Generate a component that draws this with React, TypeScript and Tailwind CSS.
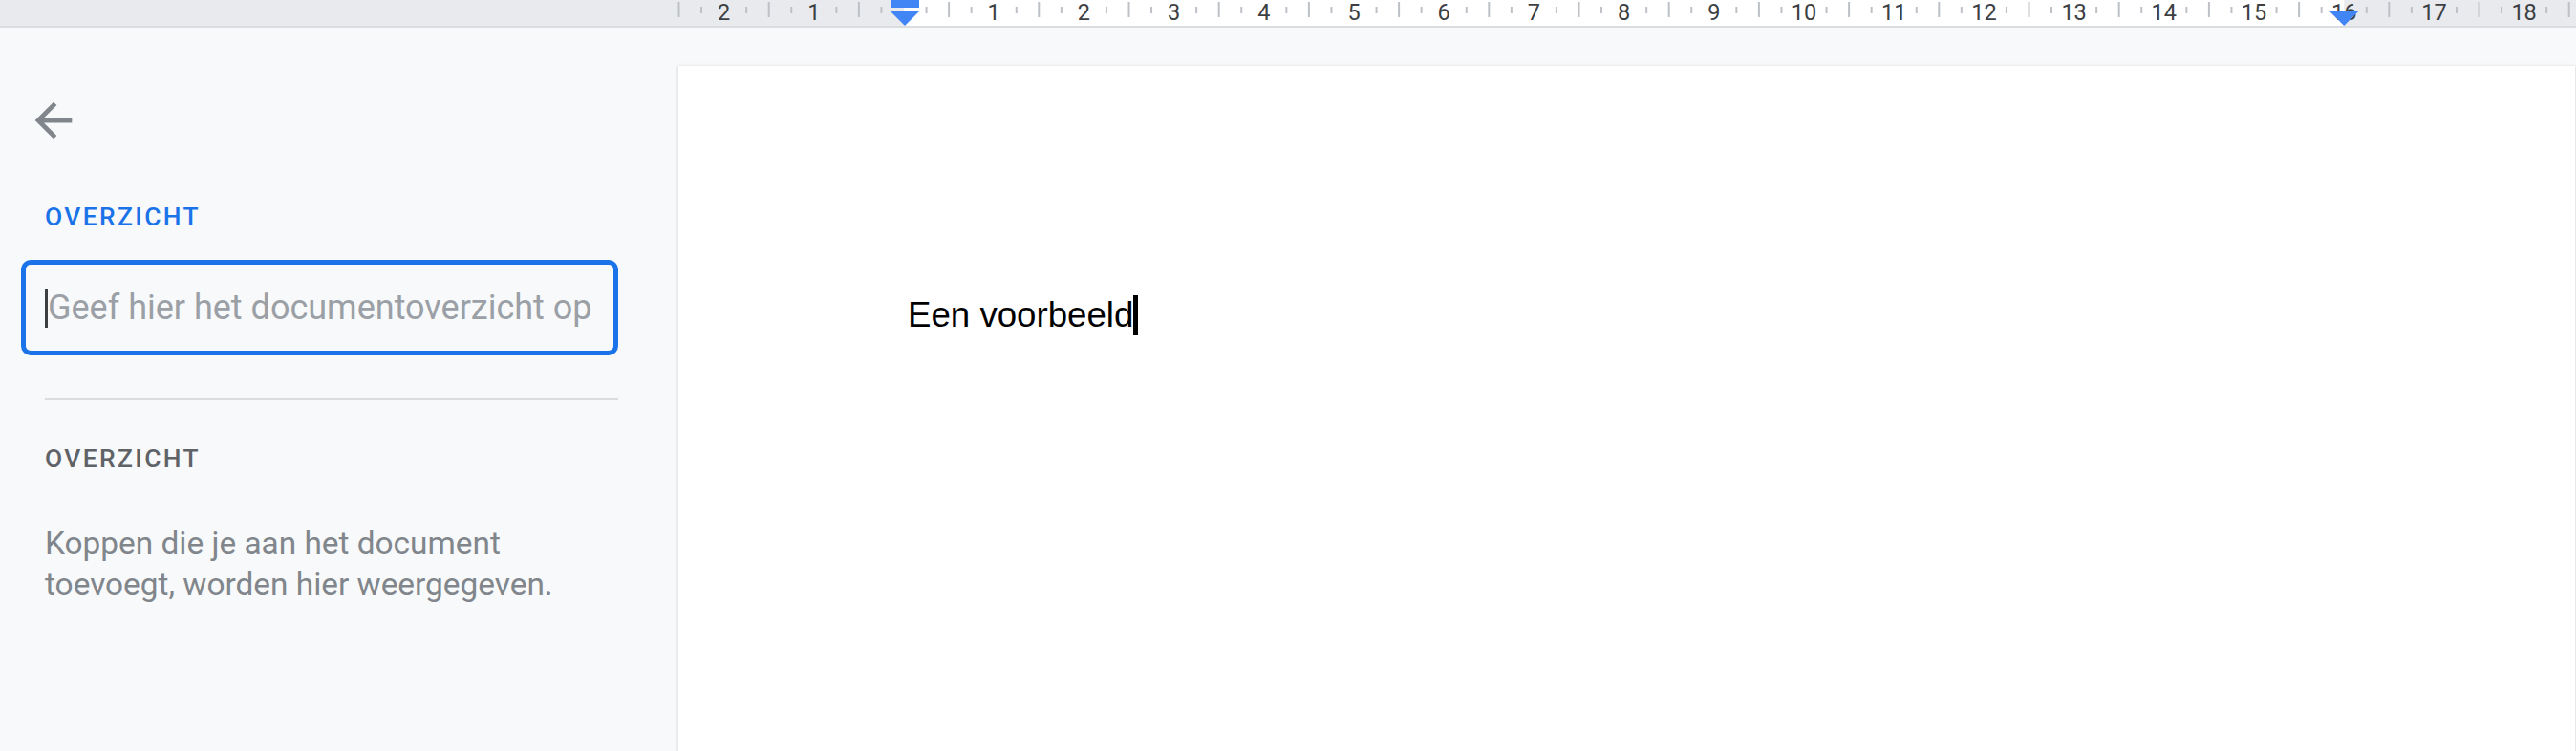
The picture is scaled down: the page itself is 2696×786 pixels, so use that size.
import React from "react";

const CM = 94.2;
const ZERO = 946;

function Ruler() {
  const ticks: React.ReactNode[] = [];
  for (let q = -10; q <= 76; q++) {
    const x = ZERO + (q * CM) / 4;
    if (x > 2700) break;
    if (q % 4 === 0) {
      const n = q / 4;
      if (n !== 0) {
        ticks.push(
          <text
            key={"t" + q}
            x={x}
            y={20.5}
            textAnchor="middle"
            fontSize={23.5}
            fill="#3c4043"
            style={{ fontFamily: "Roboto, 'Noto Sans', sans-serif" }}
          >
            {Math.abs(n)}
          </text>
        );
      }
    } else if (q % 2 === 0) {
      ticks.push(<rect key={"l" + q} x={x - 1} y={2} width={2} height={16} fill="#bdc1c6" />);
    } else {
      ticks.push(<rect key={"s" + q} x={x - 1} y={7} width={2} height={7} fill="#bdc1c6" />);
    }
  }
  const rightM = ZERO + 16 * CM;
  return (
    <div className="h-[29px] shrink-0 border-b-2 border-[#dadce0] bg-[#e8eaed]">
      <svg width={2696} height={27} className="block">
        <rect x={ZERO} y={0} width={rightM - ZERO} height={27} fill="#ffffff" />
        {ticks}
        <rect x={932} y={0} width={30} height={8} fill="#4285f4" />
        <polygon points="932,12 962,12 947,27" fill="#4285f4" />
        <polygon points={`${rightM - 15},12 ${rightM + 15},12 ${rightM},27`} fill="#4285f4" />
      </svg>
    </div>
  );
}

export default function App() {
  return (
    <div className="w-[2696px] h-[786px] overflow-hidden bg-[#f8f9fa] flex flex-col font-['Roboto','Noto_Sans',sans-serif]">
      <Ruler />
      <div className="flex flex-1 min-h-0">
        {/* Sidebar */}
        <div className="w-[710px] shrink-0 flex flex-col">
          <div className="ml-[27px] mt-[68px] w-[58px] h-[58px]">
            <svg viewBox="0 0 24 24" width={58} height={58} fill="#80868b">
              <path d="M20 11H7.83l5.59-5.59L12 4l-8 8 8 8 1.41-1.41L7.83 13H20v-2z" />
            </svg>
          </div>
          <div className="ml-[47px] mt-[56px] text-[26.4px] leading-[32px] font-medium tracking-[2.4px] text-[#1a73e8]">
            OVERZICHT
          </div>
          <div className="ml-[22px] mt-[29px] w-[625px] h-[100px] border-[5px] border-[#1a73e8] rounded-[10px] flex items-center pl-[20px]">
            <div className="w-[3px] h-[41px] bg-[#3c4043]" />
            <div className="text-[36px] leading-[42px] text-[#9aa0a6] whitespace-nowrap">
              Geef hier het documentoverzicht op
            </div>
          </div>
          <div className="ml-[47px] mt-[45px] w-[600px] h-[2px] bg-[#dadce0]" />
          <div className="ml-[47px] mt-[45px] text-[26.4px] leading-[32px] font-medium tracking-[2.4px] text-[#5f6368]">
            OVERZICHT
          </div>
          <div className="ml-[47px] mt-[51px] w-[600px] text-[33.4px] leading-[43px] text-[#80868b]">
            Koppen die je aan het document toevoegt, worden hier weergegeven.
          </div>
        </div>
        {/* Main document area */}
        <div className="flex-1 pt-[40px] min-w-0">
          <div className="w-[1985px] h-full bg-white shadow-[0_1px_3px_1px_rgba(60,64,67,0.15)] pl-[240px] pt-[240px]">
            <div className="inline-flex items-start">
              <span className="text-[36.67px] leading-[42px] text-black font-['Liberation_Sans','Arial',sans-serif] whitespace-nowrap">
                Een voorbeeld
              </span>
              <span className="w-[5px] h-[42px] bg-black" />
            </div>
          </div>
        </div>
      </div>
    </div>
  );
}
